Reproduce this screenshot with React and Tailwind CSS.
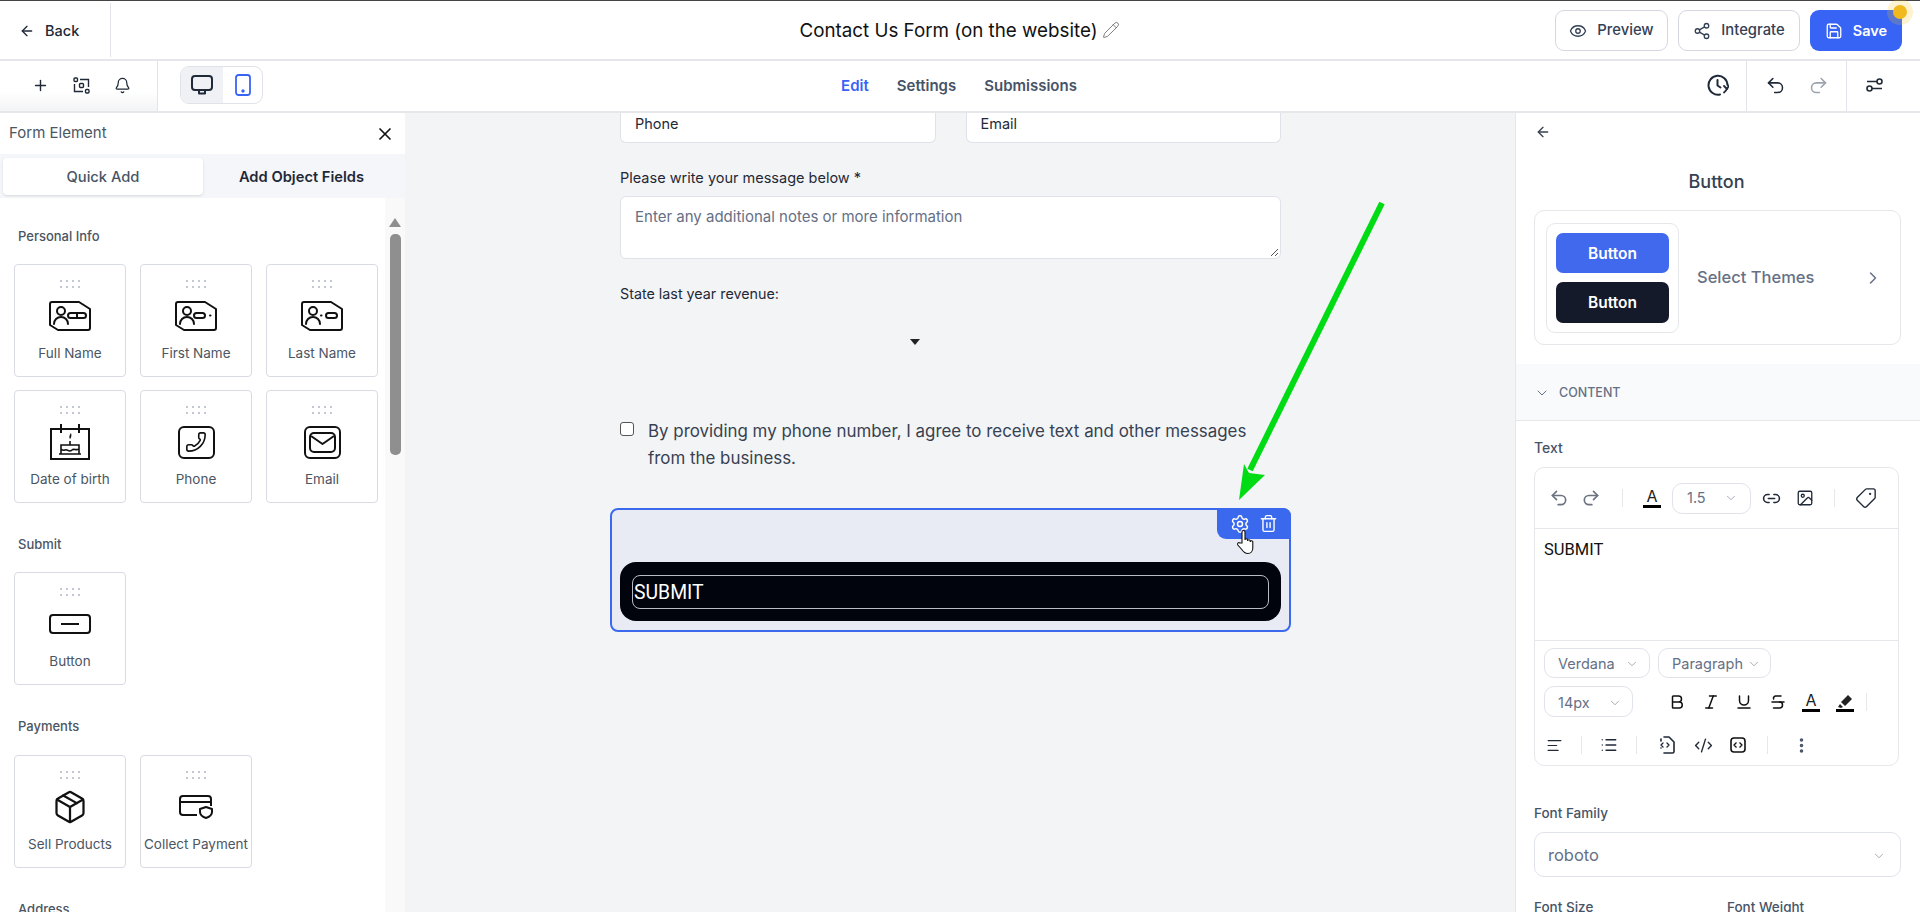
import React from "react";
import {
  ArrowLeft, Plus, Bell, X, Eye, Share2, Save, Undo2, Redo2, ChevronRight, ChevronDown,
  Link2, Image as ImageIcon, Tag, Bold, Italic, Underline, Strikethrough, List, AlignLeft, CodeXml, EllipsisVertical,
  Settings, Trash2, Pencil, Phone, Package,
} from "lucide-react";

const Dots = () => (
  <svg width="20" height="10" viewBox="0 0 20 10" className="text-[#c3c8d4]" fill="currentColor">
    {[0, 6, 12, 18].map((x) => [1, 7].map((y) => <rect key={x + "-" + y} x={x} y={y} width="2" height="2" />))}
  </svg>
);

const IdCard = ({ variant }) => (
  <svg width="42" height="30" viewBox="0 0 42 30" fill="none" stroke="#111" strokeWidth="2" strokeLinejoin="round" strokeLinecap="round">
    <path d="M3 1h27l11 7v19a2 2 0 0 1-2 2H9l-8-5V3a2 2 0 0 1 2-2z" />
    <circle cx="12" cy="10" r="4" />
    <path d="M5 23c0-4 3-7 7-7s7 3 7 7" />
    {variant === "full" && <><rect x="19" y="12" width="18" height="5" rx="2.500" /><path d="M28 12v5" /></>}
    {variant === "first" && <><rect x="19" y="12" width="11" height="5" rx="2.500" /><path d="M35 14.500h.5" /></>}
    {variant === "last" && <><path d="M20 14.500h.5" /><rect x="25" y="12" width="11" height="5" rx="2.500" /></>}
  </svg>
);

const CakeCal = () => (
  <svg width="40" height="36" viewBox="0 0 40 36" fill="none" stroke="#111" strokeWidth="2">
    <path d="M1 5h38v30H1z" />
    <path d="M11 0v9M29 0v9" />
    <path d="M9 30h22M11 30V21h18v9M11 25c3 3 4 0 6 1s3 2 5 0 4 1 7-1M20 21v-4" strokeWidth="1.600" />
    <path d="M21 9c1 2 0 5-1 6-1-1-1-4 1-6z" fill="#111" stroke="none" />
  </svg>
);

const PhoneBox = () => (
  <div className="w-[37px] h-[33px] border-2 border-[#111] rounded-[6px] flex items-center justify-center">
    <Phone size={22} strokeWidth={1.75} className="text-[#111] -scale-x-100" />
  </div>
);

const MailBox = () => (
  <svg width="37" height="33" viewBox="0 0 37 33" fill="none" stroke="#111" strokeWidth="2" strokeLinejoin="round">
    <rect x="1" y="1" width="35" height="31" rx="5" />
    <rect x="6" y="7" width="25" height="19" rx="4" />
    <path d="M7 10l11.500 8L30 10" />
  </svg>
);

const BtnIcon = () => (
  <svg width="42" height="20" viewBox="0 0 42 20" fill="none" stroke="#111" strokeWidth="2">
    <rect x="1" y="1" width="40" height="18" rx="3" />
    <path d="M12 10h18" />
  </svg>
);

const CardShield = () => (
  <svg width="36" height="26" viewBox="0 0 36 26" fill="none" stroke="#111" strokeWidth="2" strokeLinejoin="round">
    <path d="M19 21H5a3 3 0 0 1-3-3V5a3 3 0 0 1 3-3h25a3 3 0 0 1 3 3v7" />
    <path d="M2 8h31" />
    <path d="M22 15l6-2 6 2v3c0 3-3 5-6 6-3-1-6-3-6-6z" />
  </svg>
);

const HistoryIcon = () => (
  <svg width="22" height="22" viewBox="0 0 22 22" fill="none" stroke="#1f2937" strokeWidth="2" strokeLinecap="round" strokeLinejoin="round">
    <path d="M13 20.500A9.500 9.500 0 1 1 20.500 11" />
    <path d="M10.500 6v5.500l3 2" />
    <path d="M17 12l3 3 2-3.500" strokeWidth="1.800" />
    <path d="M20 14.500c-.5 1.500-1.500 3-3 4" strokeWidth="1.800" />
  </svg>
);

const ElementCard = ({ icon, label }) => (
  <div className="w-[112px] h-[113px] border border-[#d8dbe3] rounded-[4px] flex flex-col items-center pt-[14px] bg-white">
    <Dots />
    <div className="h-[50px] flex items-center justify-center mt-[2px]">{icon}</div>
    <div className="text-[13.500px] leading-[20px] text-[#4b5563] mt-[2px] whitespace-nowrap">{label}</div>
  </div>
);

const SectionLabel = ({ children, className = "" }) => (
  <div className={"text-[13px] leading-[18px] font-medium text-[#4b5563] pl-[18px] " + className}>{children}</div>
);

const Selectish = ({ children, className = "" }) => (
  <div className={"border border-[#e0e3e9] rounded-[10px] flex items-center justify-between text-[14.500px] text-[#667085] bg-white " + className}>
    <span>{children}</span>
    <ChevronDown size={14} strokeWidth={1} className="text-[#667085]" />
  </div>
);

const ColorA = () => (
  <div className="flex flex-col items-center w-[18px]">
    <span className="text-[16px] leading-[17px] text-[#222] font-normal">A</span>
    <span className="w-[18px] h-[3px] bg-black" />
  </div>
);

const Vr = ({ className = "" }) => <span className={"w-px h-[18px] bg-[#e5e7eb] " + className} />;

function HeaderBar() {
  return (
    <div className="h-[61px] shrink-0 border-t border-t-[#444] border-b-2 border-b-[#e5e7eb] flex items-center bg-white">
      <div className="flex-1 flex items-center h-full">
        <div className="w-[111px] h-[54px] border-r border-[#e2e4ea] flex items-center pl-[19px] pt-[2px] text-[14.500px] font-medium text-[#1f2937]">
          <ArrowLeft size={16} strokeWidth={2} className="mr-[10px]" />
          Back
        </div>
      </div>
      <div className="flex items-center text-[18.800px] text-[#111] ml-[17px] pt-[3px]">
        Contact Us Form (on the website)
        <Pencil size={18} strokeWidth={1} className="ml-[4px] text-[#555] mb-[3px]" />
      </div>
      <div className="flex-1 flex items-center justify-end gap-[10px] pr-[18px]">
        <div className="w-[113px] h-[41px] border border-[#d5d8e2] rounded-[9px] flex items-center justify-center gap-[10px] pt-[1px] text-[14.800px] font-medium text-[#344054]">
          <Eye size={18} strokeWidth={1.75} />Preview
        </div>
        <div className="w-[122px] h-[41px] border border-[#d5d8e2] rounded-[9px] flex items-center justify-center gap-[10px] pt-[1px] text-[14.800px] font-medium text-[#344054]">
          <Share2 size={18} strokeWidth={1.75} />Integrate
        </div>
        <div className="relative w-[92px] h-[41px] bg-[#3864f5] rounded-[9px] flex items-center justify-center gap-[10px] pt-[1px] text-[14.500px] font-semibold text-white">
          <Save size={18} strokeWidth={1.75} />Save
          <span className="absolute -top-[11px] -right-[11px] w-[26px] h-[26px] rounded-full bg-[#f5c518]/20 flex items-center justify-center">
            <span className="w-[14px] h-[14px] rounded-full bg-[#f2b91c]" />
          </span>
        </div>
      </div>
    </div>
  );
}

function ToolBar() {
  return (
    <div className="h-[52px] shrink-0 border-b-2 border-b-[#e5e7eb] flex items-center bg-white">
      <div className="flex-1 flex items-center h-full">
        <div className="w-[158px] h-full border-r border-[#e2e4ea] flex items-center pl-[32px] pb-[2px] gap-[24px] text-[#1f2937] bg-linear-to-b from-white from-60% to-gray-100">
          <Plus size={17} strokeWidth={2} />
          <svg width="17" height="17" viewBox="0 0 17 17" fill="none" stroke="#1f2937" strokeWidth="1.400">
            <rect x="1" y="1" width="3.500" height="3.500" rx="1" />
            <rect x="12.500" y="12.500" width="3.500" height="3.500" rx="1" />
            <rect x="6.500" y="6.500" width="4" height="4" rx="1" />
            <path d="M7 2.500h8.500V10M10 14.500H1.500V7" />
          </svg>
          <Bell size={17} strokeWidth={1.75} />
        </div>
        <div className="ml-[22px] mb-[2px] w-[83px] h-[38px] border border-[#dfe2e8] rounded-[9px] flex overflow-hidden">
          <div className="w-[42px] bg-[#f0f1f5] flex items-center justify-center">
            <svg width="22" height="20" viewBox="0 0 22 20" fill="none" stroke="#1f2937" strokeWidth="2" strokeLinejoin="round">
              <rect x="1" y="1" width="20" height="14" rx="3" />
              <path d="M8 15v3.500h6V15" />
            </svg>
          </div>
          <div className="flex-1 flex items-center justify-center">
            <svg width="16" height="22" viewBox="0 0 16 22" fill="none" stroke="#3864f5" strokeWidth="1.800">
              <rect x="1" y="1" width="14" height="20" rx="2.500" />
              <circle cx="8" cy="17" r=".8" fill="#3864f5" />
            </svg>
          </div>
        </div>
      </div>
      <div className="flex items-center gap-[28px] mt-[1px] mb-[1px] mr-[2px] text-[15px] font-semibold text-[#475467]">
        <span className="text-[#3864f5]">Edit</span>
        <span>Settings</span>
        <span>Submissions</span>
      </div>
      <div className="flex-1 flex items-center justify-end h-full text-[#1f2937]">
        <div className="pr-[17px] pb-[2px]"><HistoryIcon /></div>
        <div className="h-full w-[101px] border-x border-[#e2e4ea] flex items-center justify-center gap-[22px] pb-[2px]">
          <Undo2 size={21} strokeWidth={1.75} />
          <Redo2 size={21} strokeWidth={1.75} className="text-[#9ca3af]" />
        </div>
        <div className="w-[73px] flex items-center justify-center pr-[18px] pb-[2px]">
          <svg width="17" height="14" viewBox="0 0 17 14" fill="none" stroke="#1f2937" strokeWidth="1.600">
            <path d="M1 3.500h10M6 10.500h10" />
            <circle cx="13.500" cy="3.500" r="2.500" />
            <circle cx="3.500" cy="10.500" r="2.500" />
          </svg>
        </div>
      </div>
    </div>
  );
}

function LeftPanel() {
  return (
    <div className="w-[405px] shrink-0 bg-white flex flex-col overflow-hidden">
      <div className="h-[41px] shrink-0 flex items-center justify-between pl-[9px] pr-[10px] text-[15px] text-[#4b5563]">
        Form Element
        <X size={20} strokeWidth={2} className="text-[#111]" />
      </div>
      <div className="h-[44px] shrink-0 bg-[#f5f6f9] flex items-center pl-[3px] text-[14.700px]">
        <div className="w-[200px] h-[37px] pt-[2px] bg-white rounded-[4px] shadow-sm flex items-center justify-center font-medium text-[#475467]">Quick Add</div>
        <div className="flex-1 flex items-center justify-center pr-[5px] pt-[2px] font-semibold text-[#1f2937]">Add Object Fields</div>
      </div>
      <div className="flex-1 flex min-h-0">
        <div className="flex-1 pt-[29px] overflow-hidden">
          <SectionLabel>Personal Info</SectionLabel>
          <div className="grid grid-cols-[112px_112px_112px] gap-x-[14px] gap-y-[13px] pl-[14px] mt-[19px]">
            <ElementCard icon={<IdCard variant="full" />} label="Full Name" />
            <ElementCard icon={<IdCard variant="first" />} label="First Name" />
            <ElementCard icon={<IdCard variant="last" />} label="Last Name" />
            <ElementCard icon={<CakeCal />} label="Date of birth" />
            <ElementCard icon={<PhoneBox />} label="Phone" />
            <ElementCard icon={<MailBox />} label="Email" />
          </div>
          <SectionLabel className="mt-[32px]">Submit</SectionLabel>
          <div className="grid grid-cols-[112px_112px_112px] gap-[14px] pl-[14px] mt-[19px]">
            <ElementCard icon={<BtnIcon />} label="Button" />
          </div>
          <SectionLabel className="mt-[32px]">Payments</SectionLabel>
          <div className="grid grid-cols-[112px_112px_112px] gap-[14px] pl-[14px] mt-[20px]">
            <ElementCard icon={<Package size={36} strokeWidth={1.5} className="text-[#111]" />} label="Sell Products" />
            <ElementCard icon={<CardShield />} label="Collect Payment" />
          </div>
          <SectionLabel className="mt-[32px]">Address</SectionLabel>
        </div>
        <div className="w-[20px] shrink-0 bg-[#f9f9fa] pt-[20px] flex flex-col items-center">
          <svg width="12" height="9" viewBox="0 0 12 9" className="mb-[7px]"><path d="M6 0l6 9H0z" fill="#8f8f8f" /></svg>
          <div className="w-[11px] h-[221px] rounded-[5px] bg-[#8f8f8f]" />
        </div>
      </div>
    </div>
  );
}

function Canvas() {
  return (
    <div className="flex-1 min-w-0 bg-[#f3f4f6] overflow-hidden">
      <div className="w-[681px] ml-[205px] text-[14.500px] text-[#1f2937]">
        <div className="px-[10px] grid grid-cols-2 gap-[30px]">
          <div className="h-[30px] bg-white border border-t-0 border-[#dfe2e8] rounded-b-[6px] flex items-center pl-[14px] pb-[8px]">Phone</div>
          <div className="h-[30px] bg-white border border-t-0 border-[#dfe2e8] rounded-b-[6px] flex items-center pl-[14px] pb-[8px]">Email</div>
        </div>
        <div className="px-[10px] mt-[25px] leading-[20px]">Please write your message below *</div>
        <div className="mx-[10px] mt-[8px] h-[63px] bg-white border border-[#dfe2e8] rounded-[6px] pl-[14px] pt-[10px] text-[15px] text-[#667085] leading-[20px] relative">
          Enter any additional notes or more information
          <svg width="9" height="9" viewBox="0 0 9 9" className="absolute right-[1px] bottom-[1px]" stroke="#555" strokeWidth="1" fill="none"><path d="M1 8l7-7M5 8l3-3" /></svg>
        </div>
        <div className="px-[10px] mt-[25px] leading-[20px] text-[14.300px]">State last year revenue:</div>
        <div className="h-[96px] flex items-center pl-[300px] pb-[20px]">
          <svg width="10" height="6" viewBox="0 0 10 6"><path d="M0 0h10L5 6z" fill="#222" /></svg>
        </div>
        <div className="px-[10px] mt-[20px] flex items-start">
          <span className="w-[14px] h-[14px] shrink-0 bg-white border border-[#555] rounded-[3px] mt-[2px]" />
          <div className="ml-[14px] text-[16.900px] leading-[27px] text-[#374151] w-[610px] -mt-[2px]">By providing my phone number, I agree to receive text and other messages from the business.</div>
        </div>
        <div className="relative mt-[36px] h-[124px] bg-[#e8ebf4] border-2 border-[#3b69ee] rounded-[8px] pt-[52px] px-[8px]">
          <div className="absolute -top-[2px] -right-[2px] w-[74px] h-[31px] bg-[#3b69ee] rounded-bl-[9px] rounded-tr-[8px] flex items-center justify-center gap-[9px] text-white">
            <Settings size={20} strokeWidth={1.75} />
            <Trash2 size={19} strokeWidth={1.75} />
          </div>
          <div className="h-[59px] bg-[#01040d] rounded-[16px] px-[12px] flex items-center">
            <div className="w-full h-[34px] border border-[#b8bcc6] rounded-[8px] flex items-center pl-[1px] pt-[2px] text-white text-[19.400px] font-['Roboto',sans-serif]">SUBMIT</div>
          </div>
        </div>
      </div>
    </div>
  );
}

function RightPanel() {
  return (
    <div className="w-[405px] shrink-0 bg-white border-l border-[#e5e7eb] overflow-hidden">
      <div className="h-[37px] pl-[19px] flex items-center text-[#374151]">
        <ArrowLeft size={16} strokeWidth={2} />
      </div>
      <div className="text-center text-[18px] font-medium leading-[24px] text-[#374151] mt-[20px] mr-[3px]">Button</div>
      <div className="mx-[18px] mt-[16px] h-[135px] w-[367px] border border-[#e5e7eb] rounded-[10px] flex items-center pl-[11px]">
        <div className="w-[133px] h-[110px] border border-[#e5e7eb] rounded-[9px] flex flex-col items-center justify-center gap-[9px] text-[15.500px] font-semibold text-white">
          <div className="w-[113px] h-[40px] pt-[2px] bg-[#4169ed] rounded-[7px] flex items-center justify-center">Button</div>
          <div className="w-[113px] h-[41px] pt-[2px] bg-[#141a2a] rounded-[7px] flex items-center justify-center">Button</div>
        </div>
        <span className="ml-[18px] text-[16.500px] font-medium text-[#667085]">Select Themes</span>
        <ChevronRight size={20} strokeWidth={1.75} className="ml-auto mr-[17px] text-[#667085]" />
      </div>
      <div className="mt-[19px] h-[57px] pt-[2px] bg-[#f9fafb] border-b border-[#e5e7eb] flex items-center pl-[18px] text-[12.500px] font-medium text-[#667085] gap-[9px]">
        <ChevronDown size={16} strokeWidth={1.5} />
        CONTENT
      </div>
      <div className="mx-[18px] mt-[17px] text-[14px] leading-[20px] font-medium text-[#475467]">Text</div>
      <div className="mx-[18px] mt-[9px] w-[365px] h-[299px] border border-[#e5e7eb] rounded-[10px] flex flex-col">
        <div className="h-[61px] shrink-0 border-b border-[#e5e7eb] flex items-center pl-[14px] text-[#1f2937]">
          <Undo2 size={20} strokeWidth={2} className="text-[#6b7280]" />
          <Redo2 size={20} strokeWidth={2} className="text-[#6b7280] ml-[12px]" />
          <Vr className="ml-[21px]" />
          <div className="ml-[20px]"><ColorA /></div>
          <Selectish className="ml-[11px] w-[79px] h-[31px] pl-[14px] pr-[12px]">1.5</Selectish>
          <Link2 size={19} strokeWidth={2} className="ml-[11px]" />
          <ImageIcon size={18} strokeWidth={1.75} className="ml-[15px]" />
          <Vr className="ml-[20px]" />
          <Tag size={22} strokeWidth={1.5} className="ml-[20px] -scale-x-100" />
        </div>
        <div className="h-[112px] shrink-0 border-b border-[#e5e7eb] pl-[9px] pt-[9px] text-[16.500px] leading-[24px] text-[#111] font-['Roboto',sans-serif]">SUBMIT</div>
        <div className="flex-1 pl-[9px] pt-[7px] text-[#111]">
          <div className="flex gap-[8px]">
            <Selectish className="w-[106px] h-[30px] pl-[13px] pr-[10px] pt-[2px]">Verdana</Selectish>
            <Selectish className="w-[113px] h-[30px] pl-[13px] pr-[9px] pt-[2px]">Paragraph</Selectish>
          </div>
          <div className="flex items-center mt-[8px]">
            <Selectish className="w-[89px] h-[31px] pl-[13px] pr-[10px] pt-[2px]">14px</Selectish>
            <Bold size={18} strokeWidth={2} className="ml-[35px]" />
            <Italic size={18} strokeWidth={2} className="ml-[16px]" />
            <Underline size={18} strokeWidth={2} className="ml-[15px]" />
            <Strikethrough size={18} strokeWidth={2} className="ml-[16px]" />
            <div className="ml-[15px]"><ColorA /></div>
            <svg width="18" height="20" viewBox="0 0 18 20" className="ml-[16px]"><path d="M5 10l7-7 4 4-7 7-4-4zM4 12l3 3-2 1-3-1z" fill="#222" /><rect y="17" width="18" height="3" fill="#000" /></svg>
            <Vr className="ml-[12px]" />
          </div>
          <div className="flex items-center mt-[16px] pl-[2px] h-[24px] text-[#1f2937]">
            <AlignLeft size={17} strokeWidth={1.75} />
            <Vr className="ml-[18px]" />
            <List size={18} strokeWidth={1.75} className="ml-[18px]" />
            <Vr className="ml-[18px]" />
            <svg width="18" height="20" viewBox="0 0 18 20" fill="none" stroke="#1f2937" strokeWidth="1.600" strokeLinejoin="round" strokeLinecap="round" className="ml-[21px]">
              <path d="M6 2h5l5 5v9.500a1.500 1.500 0 0 1-1.500 1.500H6M3 13v-.01M3 6v-2" />
              <path d="M5 8l-2 2 2 2M9 8l2 2-2 2" strokeWidth="1.300" />
            </svg>
            <CodeXml size={19} strokeWidth={1.75} className="ml-[18px]" />
            <svg width="16" height="16" viewBox="0 0 16 16" fill="none" stroke="#111" strokeWidth="1.600" strokeLinejoin="round" className="ml-[17px]">
              <rect x="1" y="1" width="14" height="14" rx="3" />
              <path d="M6.500 5.500L4 8l2.500 2.500M9.500 5.500L12 8l-2.500 2.500" strokeWidth="1.300" />
            </svg>
            <Vr className="ml-[21px]" />
            <EllipsisVertical size={19} strokeWidth={2.5} className="ml-[24px] text-[#475467]" />
          </div>
        </div>
      </div>
      <div className="mx-[18px] mt-[37px] text-[13.500px] leading-[20px] font-medium text-[#475467]">Font Family</div>
      <Selectish className="mx-[18px] mt-[9px] w-[367px] h-[45px] pl-[13px] pr-[14px] pt-[2px] !text-[16.500px]">roboto</Selectish>
      <div className="mx-[18px] mt-[20px] flex text-[13.500px] leading-[20px] font-medium text-[#475467]">
        <span className="w-[193px]">Font Size</span><span>Font Weight</span>
      </div>
    </div>
  );
}

export default function App() {
  return (
    <div className="relative w-full h-screen overflow-hidden flex flex-col bg-white font-['Inter',sans-serif]">
      <HeaderBar />
      <ToolBar />
      <div className="flex-1 flex min-h-0">
        <LeftPanel />
        <Canvas />
        <RightPanel />
      </div>
      <svg className="absolute left-0 top-0 pointer-events-none" width="1920" height="912" viewBox="0 0 1920 912">
        <path d="M1382 203L1250 470" stroke="#00dc14" strokeWidth="6" fill="none" />
        <path d="M1239 500L1244 464L1249 473L1265 475z" fill="#00dc14" />
        <g transform="translate(1237 530)">
          <path d="M5 13V2a1.500 1.500 0 0 1 3 0V10a1.300 1.300 0 0 1 2.600 0v1a1.300 1.300 0 0 1 2.600 0v1a1.300 1.300 0 0 1 2.600 0V18c0 3-2 5.500-5 5.500c-3 0-4-1-6-4L.8 15c-1-2 1-3 2-2z" fill="#fff" stroke="#111" strokeWidth="1.100" />
        </g>
      </svg>
    </div>
  );
}
